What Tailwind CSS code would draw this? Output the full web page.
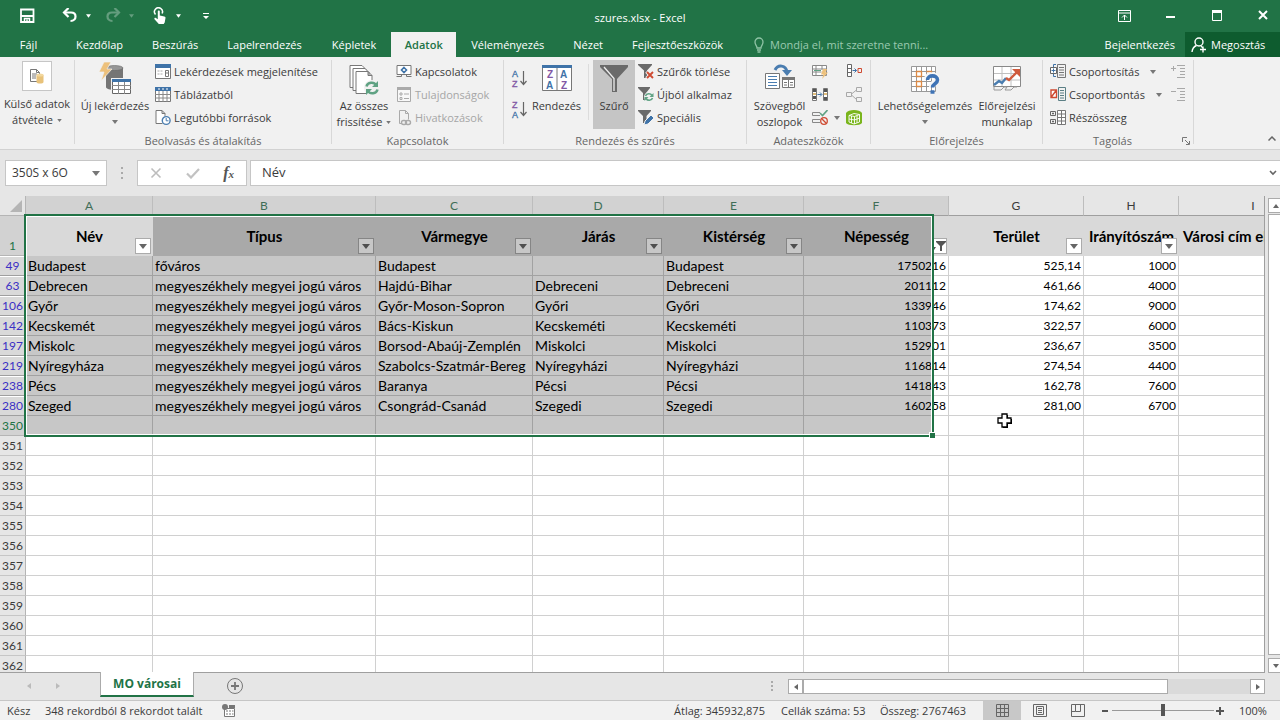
<!DOCTYPE html>
<html lang="hu">
<head>
    <meta charset="UTF-8">
    <meta name="viewport" content="width=device-width, initial-scale=1.0">
    <title>szures.xlsx - Excel</title>
    <script src="https://cdn.jsdelivr.net/npm/@tailwindcss/browser@4"></script>
</head>
<body class="h-screen flex flex-col overflow-hidden bg-[#e6e6e6] text-[#3b3b3b] text-[11px] leading-4 font-['Open_Sans',sans-serif]">

    <!-- Title bar and ribbon tabs -->
    <header class="bg-[#217346] text-white shrink-0">
        <div class="h-8 flex items-center relative">
            <button aria-label="Mentés" class="ml-[19px] w-4 h-4"><svg viewBox="0 0 16 16" class="w-4 h-4" fill="none" stroke="#fff" stroke-width="1.8"><path d="M2 1.500h12.500v12.500H2zM2 8h12.500"/><path d="M5.500 13.500v-3h5v3M8 11.500v2.500" stroke-width="1.500"/></svg></button>
            <button aria-label="Visszavonás" class="ml-[27px] flex items-center gap-2">
                <svg viewBox="0 0 16 16" class="w-4 h-4" fill="none" stroke="#fff" stroke-width="2.200"><path d="M6.500 0L2 4.500 6.500 9"/><path d="M2 4.500h7c3 0 4.500 1.800 4.500 4S12 13 8.500 13"/></svg>
                <svg viewBox="0 0 6 4" class="w-[5px] h-1" fill="#fff"><path d="M0 0h6L3 4z"/></svg>
            </button>
            <button aria-label="Mégis" class="ml-[14px] flex items-center gap-2 opacity-30">
                <svg viewBox="0 0 16 16" class="w-4 h-4" fill="none" stroke="#fff" stroke-width="2.200"><path d="M9.500 0L14 4.500 9.500 9"/><path d="M14 4.500H7c-3 0-4.500 1.800-4.500 4S4 13 7.500 13"/></svg>
                <svg viewBox="0 0 6 4" class="w-[5px] h-1" fill="#fff"><path d="M0 0h6L3 4z"/></svg>
            </button>
            <button aria-label="Érintés/egér mód" class="ml-[18px] flex items-center gap-2">
                <svg viewBox="0 0 16 18" class="w-4 h-[18px]"><path d="M3.500 7.500a4 4 0 1 1 6.600-1" fill="none" stroke="#fff" stroke-width="1.500"/><path d="M5.800 4.500c0-1.400 2-1.400 2 0V8.500l4.500 1c.9.200 1.300.7 1.200 1.600l-.8 4.400-1 1.500H6.800L2.500 12.300c-.6-1 .5-1.900 1.400-1.300l1.900 1.300z" fill="#fff"/></svg>
                <svg viewBox="0 0 6 4" class="w-[5px] h-1" fill="#fff"><path d="M0 0h6L3 4z"/></svg>
            </button>
            <button aria-label="Gyorselérési eszköztár testreszabása" class="ml-[22px]"><svg viewBox="0 0 6 6" class="w-[6px] h-[6px]" fill="#fff"><path d="M0 0h6v1H0zM0 3h6L3 6z"/></svg></button>
            <h1 class="absolute left-1/2 -translate-x-1/2 top-[10px]">szures.xlsx - Excel</h1>
            <div class="ml-auto flex items-center gap-[34px] pr-[11px]">
                <button aria-label="Menüszalag beállításai"><svg viewBox="0 0 13 12" class="w-[13px] h-3" fill="none" stroke="#fff"><path d="M.5.5h12v11H.5zM.5 3h12M6.500 10V5M4 7.500L6.500 5 9 7.500"/></svg></button>
                <button aria-label="Kis méret"><svg viewBox="0 0 12 12" class="w-3 h-3"><path d="M1 6h9v2H1z" fill="#fff"/></svg></button>
                <button aria-label="Teljes méret"><svg viewBox="0 0 12 12" class="w-3 h-3"><path d="M1.500.5h9v10h-9z" fill="none" stroke="#fff"/><path d="M1 0h10v3H1z" fill="#fff"/></svg></button>
                <button aria-label="Bezárás"><svg viewBox="0 0 12 12" class="w-3 h-3"><path d="M2 1l8 8M10 1l-8 8" stroke="#fff" stroke-width="2"/></svg></button>
            </div>
        </div>
        <nav class="h-[25px] flex items-stretch">
            <button class="w-[61px] pr-1">Fájl</button>
            <button class="px-[15px]">Kezdőlap</button>
            <button class="px-[14px]">Beszúrás</button>
            <button class="px-[15px]">Lapelrendezés</button>
            <button class="px-[15px]">Képletek</button>
            <button class="w-[65px] bg-[#f1f1f1] text-[#217346] font-semibold">Adatok</button>
            <button class="px-[15px]">Véleményezés</button>
            <button class="px-[14px]">Nézet</button>
            <button class="px-[15px]">Fejlesztőeszközök</button>
            <label class="flex items-center gap-[6px] ml-4">
                <svg viewBox="0 0 10 16" class="w-[10px] h-4" fill="none" stroke="#8fc3a5" stroke-width="1.300"><path d="M3 11c0-2.500-2-3-2-6a4 4 0 0 1 8 0c0 3-2 3.500-2 6zM3 13h4M3.500 15h3"/></svg>
                <input type="text" aria-label="Mondja el, mit szeretne tenni" placeholder="Mondja el, mit szeretne tenni..." class="w-[180px] bg-transparent outline-none placeholder:text-[#9bcab0]">
            </label>
            <a href="#" class="ml-auto px-[10px] flex items-center">Bejelentkezés</a>
            <button class="w-[95px] bg-[#0e5c2f] flex items-center pl-[6px] gap-1">
                <svg viewBox="0 0 16 16" class="w-4 h-4" fill="none" stroke="#fff" stroke-width="1.400"><circle cx="8" cy="5" r="4"/><path d="M1 15c.3-3.500 2-5.500 4.500-6.500M10 9l1.500 1.500M12 9.500v6M9 12.500h6"/></svg>Megosztás
            </button>
        </nav>
    </header>

    <!-- Ribbon -->
    <section class="h-[93px] shrink-0 flex bg-[#f1f1f1] border-b border-[#d2d2d2] py-[3px]">
        <div class="w-[75px] border-r border-[#d8d8d8] mb-[2px]">
            <button class="w-full flex flex-col items-center">
                <span class="mt-px w-[30px] h-[30px] bg-white border border-[#c6c6c6] flex items-center justify-center mb-[5px]">
                    <svg viewBox="0 0 16 16" class="w-4 h-4"><path d="M1.500 1.500h6l3 3v9h-9zM7.500 1.500v3h3M3 6h5M3 8h4M3 10h4" fill="none" stroke="#777"/><path d="M7.500 7v7c0 2 7 2 7 0V7z" fill="#e8c27a"/><ellipse cx="11" cy="7" rx="3.500" ry="1.500" fill="#f2d79d"/></svg>
                </span>
                <span>Külső adatok</span>
                <span class="flex items-center gap-1">átvétele <svg viewBox="0 0 6 4" class="w-[5px] h-[3px]" fill="#777"><path d="M0 0h6L3 4z"/></svg></span>
            </button>
        </div>

        <div class="w-[257px] flex flex-col border-r border-[#d8d8d8] mb-[2px]">
            <div class="h-[73px] shrink-0 flex">
                <button class="w-20 flex flex-col items-center">
                    <svg viewBox="0 0 34 34" class="w-[34px] h-[34px] mt-[2px] mb-[2px]"><path d="M8 6v19c0 4 17 4 17 0V6z" fill="#757575"/><ellipse cx="16.500" cy="6" rx="8.500" ry="2.500" fill="#969696" stroke="#666" stroke-width=".6"/><path d="M6 0h7L9 7h5L3 19l3-9H1z" fill="#edc17c" stroke="#f1f1f1" stroke-width=".7"/><path d="M13 16h21v17H13z" fill="#f1f1f1"/><path d="M14.500 17.500h18v14h-18z" fill="#fff" stroke="#666"/><path d="M14 17h19v3H14z" fill="#3f73a8"/><path d="M14 23.500h19M14 27.500h19M20.500 20v12M26.500 20v12" stroke="#888"/></svg>
                    <span>Új lekérdezés</span>
                    <svg viewBox="0 0 6 4" class="w-[6px] h-1 mt-[6px]" fill="#777"><path d="M0 0h6L3 4z"/></svg>
                </button>
                <div class="flex flex-col">
                    <button class="h-[23px] flex items-center gap-[3px]"><svg viewBox="0 0 16 16" class="w-4 h-4"><path d="M.5.5h15v14H.5z" fill="#fff" stroke="#777"/><path d="M0 0h16v4H0z" fill="#3f73a8"/><path d="M2.500 7h6M2.500 10h6" stroke="#aaa" stroke-dasharray="2 1"/><path d="M10.500 6.500h3v6h-3zM10.500 9h3" stroke="#777" fill="none"/></svg>Lekérdezések megjelenítése</button>
                    <button class="h-[23px] flex items-center gap-[3px]"><svg viewBox="0 0 16 16" class="w-4 h-4"><path d="M.5.5h15v14H.5z" fill="#fff" stroke="#777"/><path d="M0 0h16v4H0z" fill="#3f73a8"/><path d="M0 7.500h16M0 11h16M4 4v11M8 4v11M12 4v11" stroke="#888"/><path d="M4 1v2M8 1v2M12 1v2" stroke="#fff"/></svg>Táblázatból</button>
                    <button class="h-[23px] flex items-center gap-[3px]"><svg viewBox="0 0 16 16" class="w-4 h-4"><path d="M1 .5h6l3 3v10H1zM7 .5v3h3" fill="#fff" stroke="#777"/><circle cx="11.200" cy="10.500" r="4.800" fill="#f1f1f1"/><circle cx="11.200" cy="10.500" r="3.900" fill="#fff" stroke="#4a7db0" stroke-width="1.400"/><path d="M11.200 8v2.800h2.300" stroke="#4a7db0" fill="none"/></svg>Legutóbbi források</button>
                </div>
            </div>
            <p class="text-center text-[#666]">Beolvasás és átalakítás</p>
        </div>

        <div class="w-[172px] flex flex-col border-r border-[#d8d8d8] mb-[2px]">
            <div class="h-[73px] shrink-0 flex">
                <button class="w-16 h-[73px] flex flex-col items-center">
                    <svg viewBox="0 0 32 34" class="w-8 h-[34px] mt-[4px] shrink-0"><path d="M2 1.500h12l4 4v18H2z" fill="#fff" stroke="#777"/><path d="M5 4.500h12l4 4v18H5z" fill="#fff" stroke="#777"/><path d="M8 7.500h12l4 4v18H8zM20 7.500v4h4" fill="#fff" stroke="#777"/><circle cx="24" cy="24" r="8" fill="#f1f1f1"/><path d="M18.500 22.500c1-4.500 7.500-5 9.500-1.500M29.500 25.500c-1 4.500-7.500 5-9.500 1.500" fill="none" stroke="#5fa283" stroke-width="2.500"/><path d="M30 17v6h-6zM18 31v-6h6z" fill="#5fa283"/></svg>
                    <span>Az összes</span>
                    <span class="flex items-center gap-1">frissítése <svg viewBox="0 0 6 4" class="w-[5px] h-[3px]" fill="#777"><path d="M0 0h6L3 4z"/></svg></span>
                </button>
                <div class="flex flex-col">
                    <button class="h-[23px] flex items-center gap-[3px]"><svg viewBox="0 0 16 16" class="w-4 h-4"><path d="M1 1.500h14v9H1z" fill="#fff" stroke="#777"/><path d="M8 3.500L10.500 6 8 8.500 5.500 6z" fill="none" stroke="#3f73a8" stroke-width="1.600"/><path d="M.5 12.500h5v-2M15.500 12.500h-5v-2" fill="none" stroke="#777"/></svg>Kapcsolatok</button>
                    <button disabled class="h-[23px] flex items-center gap-[3px] text-[#a6a6a6]"><svg viewBox="0 0 16 16" class="w-4 h-4"><path d="M1.500.5h13v14h-13z" fill="#f8f8f8" stroke="#aaa"/><path d="M1 0h14v3H1z" fill="#aaa"/><path d="M4 6h2v2H4zM4 10.500h2v2H4zM8 7h5M8 11.500h5" fill="none" stroke="#aaa"/></svg>Tulajdonságok</button>
                    <button disabled class="h-[23px] flex items-center gap-[3px] text-[#a6a6a6]"><svg viewBox="0 0 16 16" class="w-4 h-4"><path d="M5 13.500H3.500V.5h6l3 3v6M9.500.5v3h3" fill="none" stroke="#aaa"/><rect x="5.500" y="10.500" width="5" height="4" rx="2" fill="none" stroke="#aaa" stroke-width="1.400"/><rect x="9.500" y="10.500" width="5" height="4" rx="2" fill="none" stroke="#aaa" stroke-width="1.400"/></svg>Hivatkozások</button>
                </div>
            </div>
            <p class="text-center text-[#666]">Kapcsolatok</p>
        </div>

        <div class="w-[243px] flex flex-col border-r border-[#d8d8d8] mb-[2px]">
            <div class="h-[73px] shrink-0 flex">
                <div class="w-6 pl-2 pt-[9px] flex flex-col gap-3 font-['Liberation_Sans',sans-serif]">
                    <button aria-label="Rendezés A-Z"><svg viewBox="0 0 16 19" class="w-4 h-[19px] overflow-visible"><text x="0" y="8" font-size="9" fill="#3f73a8" stroke="#3f73a8" stroke-width=".3">A</text><text x="0" y="18" font-size="9" fill="#8257a5" stroke="#8257a5" stroke-width=".3">Z</text><path d="M11.500 2v13M8.500 12l3 3.500 3-3.500" fill="none" stroke="#666" stroke-width="1.200"/></svg></button>
                    <button aria-label="Rendezés Z-A"><svg viewBox="0 0 16 19" class="w-4 h-[19px] overflow-visible"><text x="0" y="8" font-size="9" fill="#8257a5" stroke="#8257a5" stroke-width=".3">Z</text><text x="0" y="18" font-size="9" fill="#3f73a8" stroke="#3f73a8" stroke-width=".3">A</text><path d="M11.500 2v13M8.500 12l3 3.500 3-3.500" fill="none" stroke="#666" stroke-width="1.200"/></svg></button>
                </div>
                <button class="w-[57px] flex flex-col items-center">
                    <svg viewBox="0 0 30 28" class="w-[30px] h-7 mt-[5px] mb-[5px] font-['Liberation_Sans',sans-serif]"><path d="M.5.500h29v25H.5z" fill="#fff" stroke="#777"/><path d="M0 0h30v3H0z" fill="#3f73a8"/><path d="M15 3v22" stroke="#777"/><g font-size="10" font-weight="700"><text x="5" y="13" fill="#8257a5">Z</text><text x="4" y="24" fill="#3f73a8">A</text><text x="18" y="13" fill="#3f73a8">A</text><text x="19" y="24" fill="#8257a5">Z</text></g></svg>
                    <span>Rendezés</span>
                </button>
                <div class="w-1 h-[56px] mt-1 border-r border-[#dcdcdc]"></div>
                <button aria-pressed="true" class="ml-1 w-[42px] h-[69px] bg-[#c5c5c5] flex flex-col items-center">
                    <svg viewBox="0 0 30 30" class="w-[30px] h-[30px] mt-1 mb-1"><path d="M1 1h28v2L18 15v13h-5V15L1 3z" fill="#6a6a6a"/><path d="M5 3l10 11.500V27" fill="none" stroke="#eee" stroke-width="1.300"/></svg>
                    <span>Szűrő</span>
                </button>
                <div class="flex flex-col ml-[3px]">
                    <button class="h-[23px] flex items-center gap-[3px]"><svg viewBox="0 0 16 16" class="w-4 h-4"><path d="M0 0h14v1L9 6.500V14H6V6.500L0 1z" fill="#6a6a6a"/><path d="M8.500 7.500l6.500 7M15.500 7.500l-7 7" stroke="#f1f1f1" stroke-width="3.500"/><path d="M9 8l6 6M15 8l-6 6" stroke="#cf4b32" stroke-width="1.900"/></svg>Szűrők törlése</button>
                    <button class="h-[23px] flex items-center gap-[3px]"><svg viewBox="0 0 16 16" class="w-4 h-4"><path d="M0 0h12v1L8 6v7H5V6L0 1z" fill="#6a6a6a"/><circle cx="11" cy="10" r="5" fill="#f1f1f1"/><path d="M7.500 9c1-3 5-3 6.500-.5M14.500 11c-1 3-5 3-6.500.5" fill="none" stroke="#5fa283" stroke-width="1.600"/><path d="M15.500 6v4h-4zM6.500 14v-4h4z" fill="#5fa283"/></svg>Újból alkalmaz</button>
                    <button class="h-[23px] flex items-center gap-[3px]"><svg viewBox="0 0 16 16" class="w-4 h-4"><path d="M0 0h13v1L8.500 6v7H5V6L0 1z" fill="#6a6a6a"/><path d="M6 15l1-4 6-6 3 3-6 6z" fill="#3f73a8" stroke="#f1f1f1"/></svg>Speciális</button>
                </div>
            </div>
            <p class="text-center text-[#666]">Rendezés és szűrés</p>
        </div>

        <div class="w-[124px] flex flex-col border-r border-[#d8d8d8] mb-[2px]">
            <div class="h-[73px] shrink-0 flex">
                <button class="w-[65px] h-[73px] flex flex-col items-center">
                    <svg viewBox="0 0 32 30" class="w-8 h-[30px] mt-[4px] mb-1"><path d="M11 6c3-6 11-5 12 2" fill="none" stroke="#4a7db0" stroke-width="3"/><path d="M18 6h10l-5 6z" fill="#4a7db0"/><path d="M1.500 9.500h14v15h-14z" fill="#fff" stroke="#777"/><path d="M4 12.500h9M4 15.500h9M4 18.500h9M4 21.500h9" stroke="#4a7db0"/><path d="M18.500 13.500h12v10h-12z" fill="#fff" stroke="#777"/><path d="M18 13h13v3H18z" fill="#777"/><path d="M24.500 16v7M20 18.500h3M26 18.500h3M20 21h3M26 21h3" stroke="#777"/></svg>
                    <span>Szövegből</span><span>oszlopok</span>
                </button>
                <div class="flex flex-col">
                    <button aria-label="Villámkitöltés" class="h-[23px] flex items-center"><svg viewBox="0 0 16 16" class="w-4 h-4"><path d="M.5 1.500h14v10H.5zM.5 5h14M.5 8h9M4 1.500v10M10 1.500v4" fill="#fff" stroke="#888"/><path d="M2 6.500h7" stroke="#5fa283"/><path d="M11 5h4l-1.500 3.500H16L10 15l1.500-4.500H9z" fill="#edc17c"/></svg></button>
                    <button aria-label="Ismétlődések eltávolítása" class="h-[23px] flex items-center"><svg viewBox="0 0 16 16" class="w-4 h-4"><path d="M.5 1.500h4v12h-4zM11.500 1.500h4v12h-4z" fill="#fff" stroke="#777"/><path d="M1 2h3v3H1zM1 9h3v3H1zM12 2h3v3h-3zM12 10h3v3h-3z" fill="#555"/><path d="M1 6h3v2H1zM12 6h3v2h-3z" fill="#e0bd7a"/><path d="M5.500 7.500h4M8 5.500l2 2-2 2" fill="none" stroke="#3f73a8"/></svg></button>
                    <button aria-label="Érvényesítés" class="h-[23px] flex items-center gap-[6px]"><svg viewBox="0 0 16 16" class="w-4 h-4"><path d="M8 2.500H.5v3H8M8 9.500H.5v3H8" fill="none" stroke="#888"/><path d="M8 3l2.500 2.500L15.500 0" fill="none" stroke="#5fa283" stroke-width="1.600"/><circle cx="12" cy="11" r="3.300" fill="none" stroke="#cf4b32" stroke-width="1.300"/><path d="M9.800 8.800l4.400 4.400" stroke="#cf4b32" stroke-width="1.300"/></svg><svg viewBox="0 0 6 4" class="w-[6px] h-1" fill="#777"><path d="M0 0h6L3 4z"/></svg></button>
                </div>
                <div class="flex flex-col ml-[6px]">
                    <button aria-label="Összesítés" class="h-[23px] flex items-center"><svg viewBox="0 0 16 16" class="w-4 h-4"><path d="M1.500.5h4v12h-4zM1.500 4.500h4M1.500 8.500h4" fill="#fff" stroke="#666"/><path d="M6.500 6.500h4M8.500 4.500l2 2-2 2" fill="none" stroke="#3f73a8"/><path d="M12 4.500h3.500v4H12z" fill="none" stroke="#cf4b32"/></svg></button>
                    <button aria-label="Kapcsolatok" disabled class="h-[23px] flex items-center"><svg viewBox="0 0 16 16" class="w-4 h-4"><path d="M.5 5.500h5v4h-5zM10.500.5h5v4h-5zM10.500 10.500h5v4h-5zM5.500 7l5-4M5.500 8l5 4.500" fill="none" stroke="#a8a8a8"/></svg></button>
                    <button aria-label="Adatmodell kezelése" class="h-[23px] flex items-center"><svg viewBox="0 0 16 16" class="w-4 h-4"><path d="M0 3c2-4 14-4 16 0v10c-2 3-14 3-16 0z" fill="#7ab51d"/><path d="M3 5.500l5-2 5.500 1v7.500l-5.500 2-5-2zM3 5.500l5.500 1 5-2M8.500 6.500v7.500M3 9l5.500 1 5-2M5.500 6v7M11 5.500v7.500" fill="none" stroke="#fff" stroke-width=".9"/></svg></button>
                </div>
            </div>
            <p class="text-center text-[#666]">Adateszközök</p>
        </div>

        <div class="w-[172px] flex flex-col border-r border-[#d8d8d8] mb-[2px]">
            <div class="h-[73px] shrink-0 flex">
                <button class="w-[108px] h-[73px] flex flex-col items-center">
                    <svg viewBox="0 0 30 30" class="w-[30px] h-[30px] mt-[5px] mb-[3px]"><path d="M1.500 1.500h24v25h-24z" fill="#fff"/><path d="M1.500 1.500h24v25h-24zM1.500 6.500h24M1.500 11.500h24M1.500 16.500h24M1.500 21.500h24M6.500 1.500v25M11.500 1.500v25M16.500 1.500v25M21.500 1.500v25" fill="none" stroke="#999"/><path d="M6.500 6.500h5v5h-5zM6.500 16.500h5v5h-5zM16.500 6.500h5v3" fill="none" stroke="#dd8a45" stroke-width="1.300"/><path d="M17 14c0-5 10-5 10 0 0 4-5 3.500-5 8" fill="none" stroke="#f6f6f6" stroke-width="6"/><path d="M17.500 15c0-5.500 10-5.500 10 0 0 4-5 3.500-5 7.500M20.500 27h4" fill="none" stroke="#3f73b5" stroke-width="3.600"/></svg>
                    <span>Lehetőségelemzés</span>
                    <svg viewBox="0 0 6 4" class="w-[6px] h-1 mt-[6px]" fill="#777"><path d="M0 0h6L3 4z"/></svg>
                </button>
                <button class="w-[56px] h-[73px] flex flex-col items-center">
                    <svg viewBox="0 0 30 30" class="w-[30px] h-[30px] mt-[5px] mb-[3px]"><path d="M1.500 1.500h27v20h-27z" fill="#fff" stroke="#888"/><path d="M2 8.500h26M2 15h26M10 2v19M19 2v19" stroke="#c0c0c0"/><path d="M2 22v3h7l3-3h3l-2 3h6l3-3h3" fill="none" stroke="#999"/><path d="M2 20l5-4 3 2 4-5" fill="none" stroke="#4a7db0" stroke-width="2.400"/><path d="M14 13l3 2 9-9" fill="none" stroke="#cf5a3c" stroke-width="2.400"/><path d="M20 4h8v8z" fill="#cf5a3c"/></svg>
                    <span>Előrejelzési</span><span>munkalap</span>
                </button>
            </div>
            <p class="text-center text-[#666]">Előrejelzés</p>
        </div>

        <div class="w-[151px] flex flex-col border-r border-[#d8d8d8] mb-[2px]">
            <div class="h-[73px] shrink-0 flex justify-between pl-[7px] pr-[6px]">
                <div class="flex flex-col">
                    <button class="h-[23px] flex items-center gap-[3px]"><svg viewBox="0 0 16 16" class="w-4 h-4"><path d="M7.500.5h8v13h-8zM9 3.500h5M9 6h5M9 8.500h5M9 11h5" fill="none" stroke="#777"/><path d="M.5 3.500h6v6h-6z" fill="#fff" stroke="#666"/><path d="M3.500 4.500v4M1.500 6.500h4M3.500 3V.5H6M3.500 10v2.500H6" fill="none" stroke="#3f73a8"/></svg>Csoportosítás<svg viewBox="0 0 6 4" class="w-[6px] h-1 ml-2" fill="#777"><path d="M0 0h6L3 4z"/></svg></button>
                    <button class="h-[23px] flex items-center gap-[3px]"><svg viewBox="0 0 16 16" class="w-4 h-4"><path d="M8.500.5h7v13h-7zM10 3.500h4M10 6h4M10 8.500h4M10 11h4" fill="none" stroke="#5b7f85"/><path d="M1 3h5.500v7.500H1zM1 10.500L6.500 3" fill="#fff" stroke="#cf4b32" stroke-width="1.400"/></svg>Csoportbontás<svg viewBox="0 0 6 4" class="w-[6px] h-1 ml-2" fill="#777"><path d="M0 0h6L3 4z"/></svg></button>
                    <button class="h-[23px] flex items-center gap-[3px]"><svg viewBox="0 0 16 16" class="w-4 h-4"><path d="M7.500.5h8v14h-8zM7.500 4h8M7.500 7.500h8M7.500 11h8M11.500.5v14" fill="#fff" stroke="#777"/><path d="M.5 1.500h5v4h-5zM.5 9.500h5v4h-5zM2 3.500h2M3 2.500v2M2 11.500h2M3 10.500v2" fill="none" stroke="#666"/></svg>Részösszeg</button>
                </div>
                <div class="flex flex-col">
                    <button disabled aria-label="Részletek megjelenítése" class="h-[23px] flex items-center"><svg viewBox="0 0 16 16" class="w-4 h-4"><path d="M0 4.500h5M2.500 2v5M6 1.500h8M9 4.500h5M9 7.500h5M9 10.500h5M6 13.500h8" fill="none" stroke="#a8a8a8"/></svg></button>
                    <button disabled aria-label="Részletek elrejtése" class="h-[23px] flex items-center"><svg viewBox="0 0 16 16" class="w-4 h-4"><path d="M0 4.500h5M6 1.500h8M9 4.500h5M9 7.500h5M9 10.500h5M6 13.500h8" fill="none" stroke="#a8a8a8"/></svg></button>
                </div>
            </div>
            <div class="flex items-center text-[#666]">
                <p class="flex-1 text-center">Tagolás</p>
                <button aria-label="Tagolás beállításai" class="mr-[3px] h-4"><svg viewBox="0 0 8 8" class="w-2 h-2" fill="none" stroke="#777"><path d="M.5 5V.5H5M3 3l4 4M7.500 4v3.500H4"/></svg></button>
            </div>
        </div>
        <button aria-label="Menüszalag összecsukása" class="ml-auto self-end mr-[4px] mb-[2px]"><svg viewBox="0 0 8 5" class="w-2 h-[5px] mb-[3px]" fill="none" stroke="#666" stroke-width="1.500"><path d="M.5 4.500L4 1l3.500 3.500"/></svg></button>
    </section>

    <!-- Formula bar -->
    <section class="h-[46px] shrink-0 flex items-start pt-[10px] text-xs">
        <div class="ml-[5px] w-[102px] h-[26px] bg-white border border-[#c6c6c6] flex items-center">
            <input type="text" aria-label="Név mező" value="350S x 6O" class="min-w-0 flex-1 pl-[6px] outline-none">
            <button aria-label="Nevek listája" class="mr-[6px]"><svg viewBox="0 0 8 5" class="w-2 h-[5px]" fill="#777"><path d="M0 0h8L4 5z"/></svg></button>
        </div>
        <svg viewBox="0 0 2 12" class="w-[2px] h-3 ml-[14px] mt-[7px]" fill="#aaa"><path d="M0 0h2v2H0zM0 5h2v2H0zM0 10h2v2H0z"/></svg>
        <div class="ml-[14px] w-[110px] h-[26px] bg-white border border-[#c6c6c6] flex items-center justify-between px-3">
            <button aria-label="Mégse"><svg viewBox="0 0 12 12" class="w-3 h-3" stroke="#bdbdbd" stroke-width="1.600"><path d="M1.500 1.500l9 9M10.500 1.500l-9 9"/></svg></button>
            <button aria-label="Beírás"><svg viewBox="0 0 14 12" class="w-[14px] h-3" fill="none" stroke="#c2c2c2" stroke-width="2.200"><path d="M1 6.500l4 4L13 2"/></svg></button>
            <button aria-label="Függvény beszúrása" class="font-['Liberation_Serif',serif] italic font-bold text-base leading-4 text-[#555]">f<span class="text-[11px]">x</span></button>
        </div>
        <div class="ml-[3px] flex-1 h-[26px] bg-white border border-[#c6c6c6] border-r-0 flex items-center">
            <input type="text" aria-label="Szerkesztőléc" value="Név" class="min-w-0 flex-1 pl-[11px] text-[13px] outline-none">
            <button aria-label="Szerkesztőléc kibontása" class="mr-[3px]"><svg viewBox="0 0 8 6" class="w-2 h-[6px]" fill="none" stroke="#666" stroke-width="1.600"><path d="M1 1l3 3 3-3"/></svg></button>
        </div>
    </section>

    <!-- Sheet -->
    <main class="flex-1 min-h-0 flex">
        <div class="flex-1 min-w-0 relative overflow-hidden border-r border-b border-[#9f9f9f] bg-white font-['Lato',sans-serif] [font-variant-ligatures:none]">
            <table class="table-fixed border-separate border-spacing-0 w-[1328px] text-black">
                <colgroup>
                    <col class="w-[26px]"><col class="w-[127px]"><col class="w-[223px]"><col class="w-[157px]"><col class="w-[131px]"><col class="w-[140px]"><col class="w-[145px]"><col class="w-[135px]"><col class="w-[95px]"><col class="w-[149px]">
                </colgroup>
                <thead id="columns"></thead>
                <tbody id="rows"></tbody>
            </table>
            <!-- selected range, the active cell stays unshaded -->
            <div class="absolute left-6 top-[18px] w-[910px] h-[223px] border-2 border-[#217346] pointer-events-none">
                <div class="h-full border border-white flex flex-col">
                    <div class="h-[39px] ml-[126px] bg-black/22"></div>
                    <div class="flex-1 bg-black/22"></div>
                </div>
                <div class="absolute -right-[3px] -bottom-[3px] w-[6px] h-[6px] bg-[#217346] border-t border-l border-white"></div>
            </div>
            <svg viewBox="0 0 16 16" class="absolute left-[997px] top-[217px] w-4 h-4"><path d="M6 2h5v4h4v5h-4v4H6z" fill="#000"/><path d="M5 1h5v4h4v5h-4v4H5v-4H1V5h4z" fill="#fff" stroke="#000" stroke-width="1.300"/></svg>
        </div>
        <div class="w-[15px] shrink-0 overflow-hidden pl-[3px] pt-[2px] flex flex-col gap-px">
            <button aria-label="Görgetés fel" class="w-[15px] h-[15px] shrink-0 bg-white border border-[#ababab] flex items-center justify-center"><svg viewBox="0 0 6 4" class="w-[6px] h-1" fill="#666"><path d="M0 4h6L3 0z"/></svg></button>
            <div class="w-[15px] flex-1 bg-white border border-[#ababab] mb-[2px]"></div>
            <button aria-label="Görgetés le" class="w-[15px] h-[15px] shrink-0 bg-white border border-[#ababab] flex items-center justify-center"><svg viewBox="0 0 6 4" class="w-[6px] h-1" fill="#666"><path d="M0 0h6L3 4z"/></svg></button>
        </div>
    </main>

    <!-- Sheet tabs -->
    <section class="h-[27px] shrink-0 flex items-start">
        <button disabled aria-label="Előző lap" class="ml-[27px] mt-[10px]"><svg viewBox="0 0 4 6" class="w-1 h-[6px]" fill="#bbb"><path d="M4 0v6L0 3z"/></svg></button>
        <button disabled aria-label="Következő lap" class="ml-[25px] mt-[10px]"><svg viewBox="0 0 4 6" class="w-1 h-[6px]" fill="#bbb"><path d="M0 0v6l4-3z"/></svg></button>
        <button class="relative ml-10 w-[94px] h-[25px] pt-px bg-white border-x border-[#ababab] border-b-2 border-b-[#217346] text-[#217346] text-xs font-bold -mt-px">MO városai</button>
        <button aria-label="Új munkalap" class="ml-[33px] mt-[5px]"><svg viewBox="0 0 16 16" class="w-4 h-4" fill="none" stroke="#777"><circle cx="8" cy="8" r="7.500"/><path d="M8 4v8M4 8h8" stroke-width="1.800"/></svg></button>
        <svg viewBox="0 0 2 10" class="w-[2px] h-[10px] ml-auto mt-[8px]" fill="#aaa"><path d="M0 0h2v2H0zM0 4h2v2H0zM0 8h2v2H0z"/></svg>
        <div class="mx-[15px] mt-[6px] w-[477px] h-[15px] flex bg-[#dadada]">
            <button aria-label="Görgetés balra" class="w-[15px] bg-white border border-[#ababab] flex items-center justify-center"><svg viewBox="0 0 4 6" class="w-1 h-[6px]" fill="#666"><path d="M4 0v6L0 3z"/></svg></button>
            <div class="w-[365px] bg-white border border-[#ababab]"></div>
            <button aria-label="Görgetés jobbra" class="ml-auto w-[15px] bg-white border border-[#ababab] flex items-center justify-center"><svg viewBox="0 0 4 6" class="w-1 h-[6px]" fill="#666"><path d="M0 0v6l4-3z"/></svg></button>
        </div>
    </section>

    <!-- Status bar -->
    <footer class="h-5 shrink-0 flex items-center bg-[#f1f1f1] border-t border-[#c6c6c6]">
        <span class="ml-[7px] w-[38px]">Kész</span>
        <span>348 rekordból 8 rekordot talált</span>
        <button aria-label="Makró rögzítése" class="ml-5"><svg viewBox="0 0 13 13" class="w-[13px] h-[13px]"><path d="M2.500 4.500h10v8h-10z" fill="#fff" stroke="#777"/><path d="M7 1h6v3H7z" fill="#777"/><path d="M4 7h2M7 7h2M10 7h1.500M4 10h2M7 10h2M10 10h1.500" stroke="#777"/><circle cx="3" cy="3" r="3" fill="#777"/></svg></button>
        <span class="ml-auto w-[107px]">Átlag: 345932,875</span>
        <span class="w-[99px]">Cellák száma: 53</span>
        <span class="w-[103px]">Összeg: 2767463</span>
        <button aria-label="Normál" class="w-[38px] self-stretch bg-[#c8c8c8] flex items-center justify-center"><svg viewBox="0 0 13 13" class="w-[13px] h-[13px]" fill="none" stroke="#666"><path d="M.5.5h12v12H.5zM.5 4.500h12M.5 8.500h12M4.500.5v12M8.500.5v12"/></svg></button>
        <button aria-label="Lapelrendezés" class="w-[38px] flex justify-center"><svg viewBox="0 0 14 13" class="w-[14px] h-[13px]" fill="none" stroke="#666"><path d="M.5.5h13v12H.5zM3.500 2.500h7v8h-7zM5 4.500h4M5 6.500h4M5 8.500h4"/></svg></button>
        <button aria-label="Oldaltörés megtekintése" class="w-[38px] flex justify-center"><svg viewBox="0 0 14 13" class="w-[14px] h-[13px]" fill="none" stroke="#666"><path d="M.5.5h13v12H.5zM4.500.5v7h-4M4.500 7.500h5v-7"/></svg></button>
        <button aria-label="Kicsinyítés" class="ml-1"><svg viewBox="0 0 8 8" class="w-2 h-2"><path d="M1 3h6v2H1z" fill="#555"/></svg></button>
        <input type="range" aria-label="Nagyítás" min="10" max="190" value="100" class="ml-[3px] w-[102px] h-3 appearance-none bg-transparent [&::-webkit-slider-runnable-track]:h-px [&::-webkit-slider-runnable-track]:bg-[#999] [&::-webkit-slider-thumb]:appearance-none [&::-webkit-slider-thumb]:w-1 [&::-webkit-slider-thumb]:h-3 [&::-webkit-slider-thumb]:-mt-[6px] [&::-webkit-slider-thumb]:bg-[#555]">
        <button aria-label="Nagyítás növelése" class="ml-[2px]"><svg viewBox="0 0 8 8" class="w-2 h-2"><path d="M0 3h3V0h2v3h3v2H5v3H3V5H0z" fill="#555"/></svg></button>
        <span class="ml-[15px] w-[41px]">100%</span>
    </footer>

    <script>
        const letters = ["A", "B", "C", "D", "E", "F", "G", "H", "I"];
        const headings = ["Név", "Típus", "Vármegye", "Járás", "Kistérség", "Népesség", "Terület", "Irányítószám", "Városi cím elnyerése"];
        const mjv = "megyeszékhely megyei jogú város";
        const data = [
            [49, "Budapest", "főváros", "Budapest", "", "Budapest", "1750216", "525,14", "1000"],
            [63, "Debrecen", mjv, "Hajdú-Bihar", "Debreceni", "Debreceni", "201112", "461,66", "4000"],
            [106, "Győr", mjv, "Győr-Moson-Sopron", "Győri", "Győri", "133946", "174,62", "9000"],
            [142, "Kecskemét", mjv, "Bács-Kiskun", "Kecskeméti", "Kecskeméti", "110373", "322,57", "6000"],
            [197, "Miskolc", mjv, "Borsod-Abaúj-Zemplén", "Miskolci", "Miskolci", "152901", "236,67", "3500"],
            [219, "Nyíregyháza", mjv, "Szabolcs-Szatmár-Bereg", "Nyíregyházi", "Nyíregyházi", "116814", "274,54", "4400"],
            [238, "Pécs", mjv, "Baranya", "Pécsi", "Pécsi", "141843", "162,78", "7600"],
            [280, "Szeged", mjv, "Csongrád-Csanád", "Szegedi", "Szegedi", "160258", "281,00", "6700"]
        ];
        for (let n = 350; n <= 362; n++) data.push([n]);

        const arrow = '<svg viewBox="0 0 8 5" class="w-2 h-[5px]" fill="#666"><path d="M0 0h8L4 5z"/></svg>';
        const funnel = '<svg viewBox="0 0 14 12" class="w-[14px] h-3" fill="#555"><path d="M4 1h10v1l-4 4v5H8V6L4 2zM0 7h4L2 10z"/></svg>';

        // column letters
        let head = '<tr><th class="h-5 p-0 border-r border-b border-[#b5b5b5] bg-[#e6e6e6]"><svg viewBox="0 0 12 12" class="w-3 h-3 ml-[10px]" fill="#b5b5b5"><path d="M12 0v12H0z"/></svg></th>';
        letters.forEach((l, i) => {
            const look = i < 6 ? "bg-[#d2d2d2] text-[#3f6e57]" : "bg-[#e6e6e6] text-[#3b3b3b]";
            head += `<th class="h-5 p-0 border-r border-b border-r-[#bdbdbd] border-b-[#9f9f9f] text-xs leading-4 font-normal ${look}">${l}</th>`;
        });
        head += "</tr>";
        document.getElementById("columns").innerHTML = head;

        // heading row with the filter buttons
        let body = '<tr><th class="h-10 p-0 pb-px border-r border-b border-[#b5b5b5] bg-[#d2d2d2] text-[#217346] text-xs leading-4 font-normal align-bottom">1</th>';
        headings.forEach((h, i) => {
            const align = i === 8 ? "text-left pl-1" : "text-center";
            const btn = i === 8 ? "" : `<button aria-label="${h} szűrése" class="absolute right-[2px] bottom-[2px] w-4 h-4 bg-white border border-[#ababab] flex items-center justify-center">${i === 5 ? funnel : arrow}</button>`;
            body += `<th class="relative h-10 p-0 bg-[#d9d9d9] text-[15px] leading-5 font-bold whitespace-nowrap ${align}">${h}${btn}</th>`;
        });
        body += "</tr>";

        data.forEach((row) => {
            const n = row[0];
            const look = n < 350 ? "bg-[#d9d9d9] text-[#3b30c4] border-b-[#9f9f9f] border-t border-t-white" : n === 350 ? "bg-[#d2d2d2] text-[#217346] border-b-[#b5b5b5]" : "bg-[#e6e6e6] text-[#3b3b3b] border-b-[#c6c6c6]";
            body += `<tr><th class="h-5 p-0 border-r border-b border-r-[#b5b5b5] text-xs font-normal ${look}">${n}</th>`;
            for (let i = 1; i <= 9; i++) {
                const kind = i >= 6 ? "text-right text-xs pr-[2px]" : "text-left text-sm pl-[2px]";
                body += `<td class="h-5 p-0 border-r border-b border-[#d0d0d0] leading-[18px] whitespace-nowrap ${kind}">${row[i] || ""}</td>`;
            }
            body += "</tr>";
        });
        document.getElementById("rows").innerHTML = body;
    </script>
</body>
</html>
